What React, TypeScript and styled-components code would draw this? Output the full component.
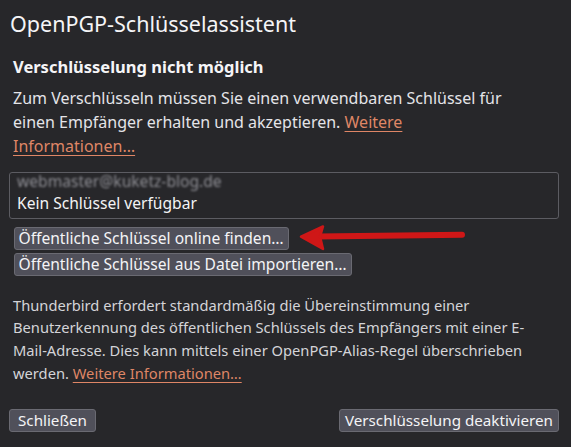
import * as React from "react";
import styled, { createGlobalStyle } from "styled-components";

const FONT = `"Noto Sans", "DejaVu Sans", sans-serif`;

const GlobalStyle = createGlobalStyle`
  html, body {
    margin: 0;
    padding: 0;
    background: #27272a;
  }
  body {
    font-family: ${FONT};
    color: #f3f3f5;
  }
`;

const App: React.FC = (): JSX.Element => (
  <Dialog>
    <GlobalStyle />
    <Title>OpenPGP-Schlüsselassistent</Title>
    <Content>
      <Heading>Verschlüsselung nicht möglich</Heading>
      <Intro>
        Zum Verschlüsseln müssen Sie einen verwendbaren Schlüssel für einen
        Empfänger erhalten und akzeptieren. <Link>Weitere Informationen…</Link>
      </Intro>
    </Content>

    <ListBox>
      <Blurred>webmaster@kuketz-blog.de</Blurred>
      <ListItem>Kein Schlüssel verfügbar</ListItem>
    </ListBox>

    <Actions>
      <Annotated>
        <Button>Öffentliche Schlüssel online finden…</Button>
        <Arrow viewBox="0 0 170 30" width="170" height="30">
          <path
            d="M20 13.6 L164 11.8"
            stroke="#cf1717"
            strokeWidth="6"
            strokeLinecap="round"
            fill="none"
          />
          <path
            d="M3 13.7 L25 3.5 L22 13.6 L25 26 Z"
            fill="#cf1717"
            stroke="#cf1717"
            strokeWidth="2.5"
            strokeLinejoin="round"
          />
        </Arrow>
      </Annotated>
      <Button>Öffentliche Schlüssel aus Datei importieren…</Button>
    </Actions>

    <Note>
      Thunderbird erfordert standardmäßig die Übereinstimmung einer
      Benutzerkennung des öffentlichen Schlüssels des Empfängers mit einer
      E-Mail-Adresse. Dies kann mittels einer OpenPGP-Alias-Regel
      überschrieben werden. <Link>Weitere Informationen…</Link>
    </Note>

    <Footer>
      <FooterButton $minWidth={87}>Schließen</FooterButton>
      <FooterButton>Verschlüsselung deaktivieren</FooterButton>
    </Footer>
  </Dialog>
);

export default App;

const Dialog = styled.div`
  width: 571px;
  height: 447px;
  box-sizing: border-box;
  padding: 10px 12px 15px 9px;
  display: flex;
  flex-direction: column;
  background: #27272a;
`;

const Title = styled.div`
  font-size: 21.5px;
  line-height: 28px;
  padding-left: 1px;
  color: #f5f5f7;
`;

const Content = styled.div`
  padding-left: 4px;
  margin-top: 17.5px;
`;

const Heading = styled.div`
  font-size: 16.5px;
  font-weight: 700;
  line-height: 22px;
  color: #f5f5f7;
`;

const Intro = styled.p`
  margin: 8.3px 0 0;
  max-width: 506px;
  font-size: 16px;
  line-height: 24.3px;
  color: #e4e4e8;
`;

const Link = styled.span`
  color: #df8666;
  text-decoration: underline;
  text-underline-offset: 3px;
`;

const ListBox = styled.div`
  margin-top: 13.5px;
  height: 47px;
  box-sizing: border-box;
  border: 1px solid #5c5c62;
  border-radius: 3px;
  padding: 0 7px;
  overflow: hidden;
  display: flex;
  flex-direction: column;
`;

const Blurred = styled.div`
  font-size: 15.6px;
  line-height: 19px;
  margin-top: -1px;
  color: #8e8e94;
  filter: blur(0.9px);
`;

const ListItem = styled.div`
  font-size: 15.6px;
  line-height: 24px;
  color: #f3f3f5;
`;

const Actions = styled.div`
  margin-top: 8px;
  padding-left: 4.5px;
  display: flex;
  flex-direction: column;
  align-items: flex-start;
  gap: 3px;
`;

const Annotated = styled.div`
  position: relative;
`;

const Arrow = styled.svg`
  position: absolute;
  left: 284px;
  top: -4px;
  pointer-events: none;
`;

const Button = styled.button`
  font-family: ${FONT};
  font-size: 15.6px;
  line-height: 21px;
  height: 23px;
  box-sizing: border-box;
  padding: 0 4px;
  color: #f4f4f6;
  background: #50505a;
  border: 1px solid #6a6a72;
  border-radius: 3px;
  white-space: nowrap;
`;

const FooterButton = styled(Button)<{ $minWidth?: number }>`
  font-size: 15.2px;
  padding: 0 5px;
  min-width: ${p => (p.$minWidth ? `${p.$minWidth}px` : "auto")};
`;

const Note = styled.p`
  margin: 17.7px 0 0;
  padding-left: 4px;
  max-width: 536px;
  font-size: 14.7px;
  line-height: 22.6px;
  color: #d4d4d8;
`;

const Footer = styled.div`
  margin-top: auto;
  display: flex;
  justify-content: space-between;
  align-items: center;
`;
